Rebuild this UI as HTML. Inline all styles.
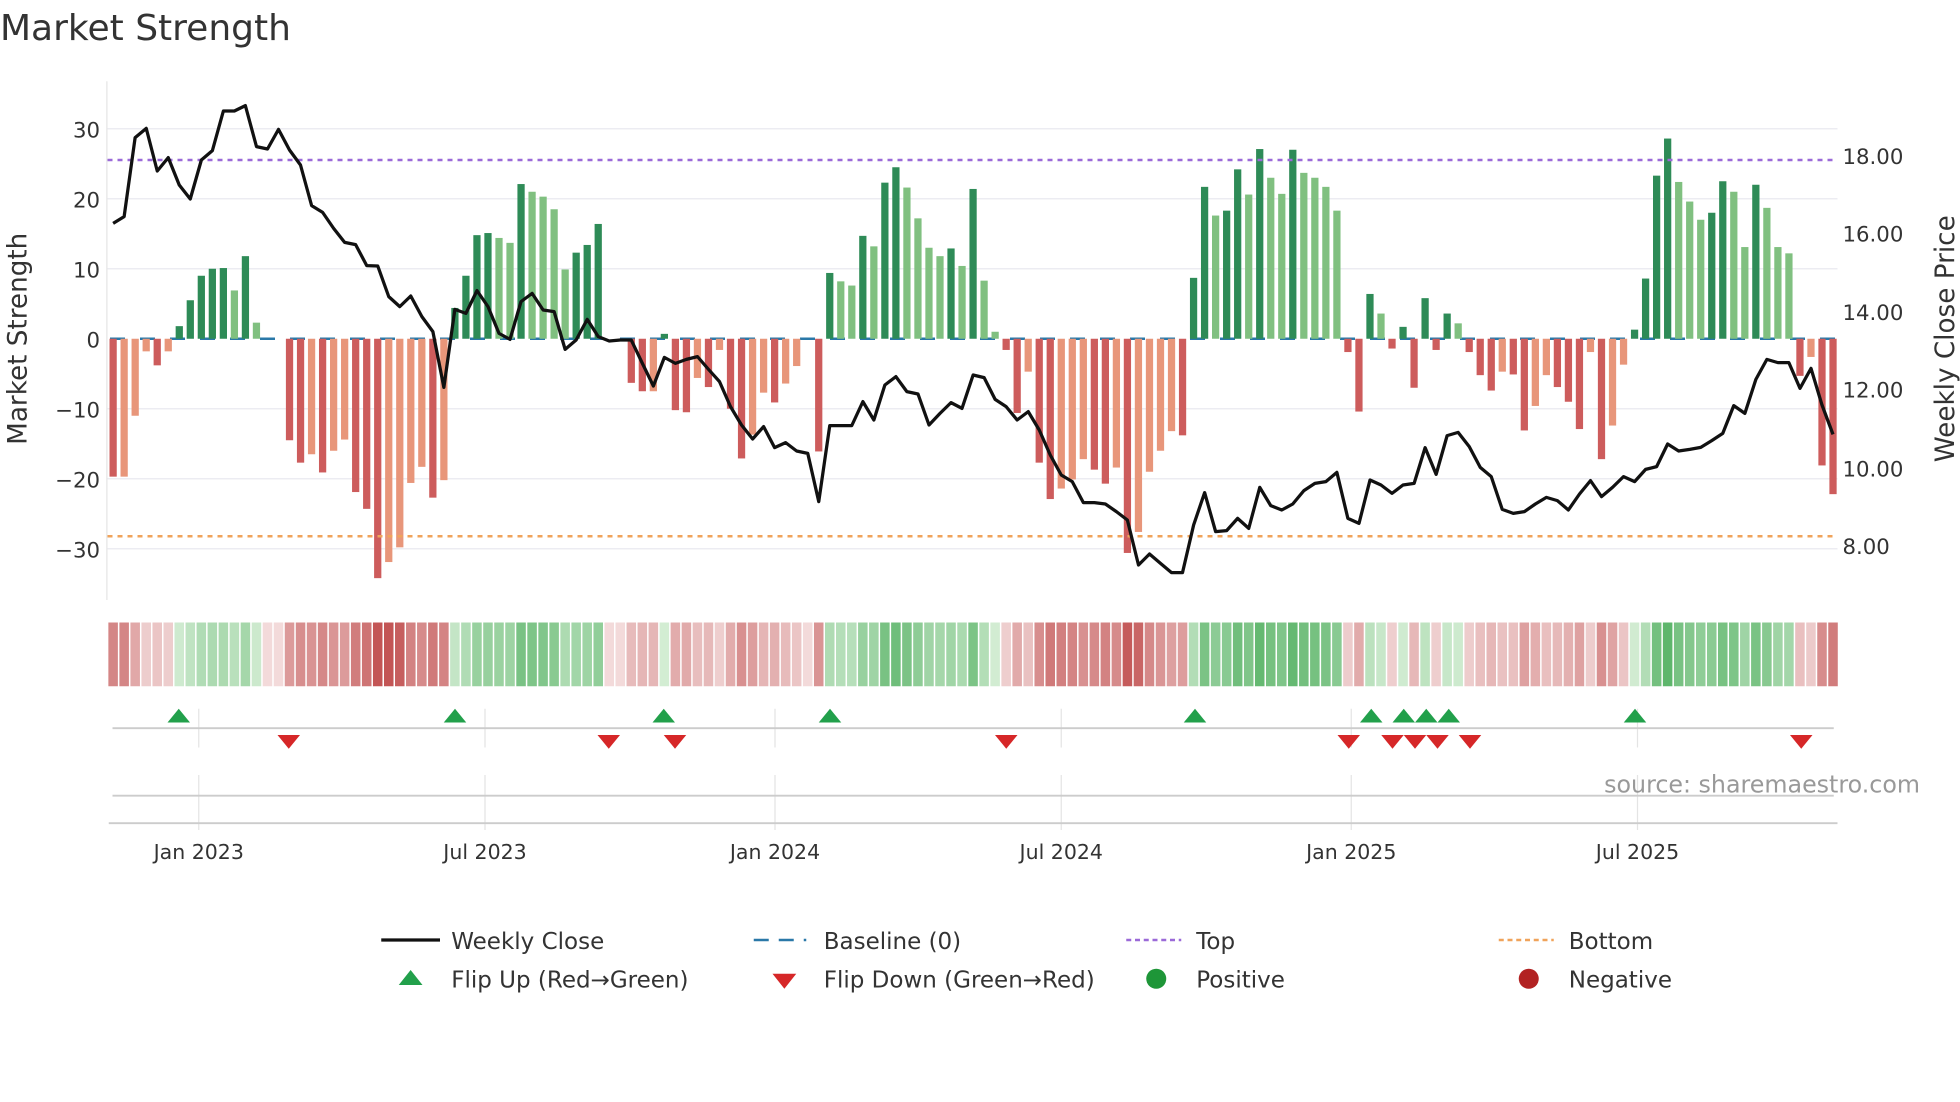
<!DOCTYPE html>
<html><head><meta charset="utf-8"><style>
html,body{margin:0;padding:0;background:#fff;}
svg{display:block;font-family:"DejaVu Sans","Liberation Sans",sans-serif;}
</style></head><body>
<svg id="s" width="1960" height="1102" viewBox="0 0 1568 881.6" xmlns="http://www.w3.org/2000/svg">
<rect width="1568" height="882" fill="#fff"/>
<text x="0" y="32" font-size="28.8" fill="#333">Market Strength</text>
<g id="grid"></g>
<g id="bars"></g>
<line x1="86" y1="128" x2="1468" y2="128" stroke="#9b6ad8" stroke-width="2" stroke-dasharray="4,4"/>
<line x1="86" y1="429" x2="1468" y2="429" stroke="#f0a35a" stroke-width="2" stroke-dasharray="4,4"/>
<polyline id="price" fill="none" stroke="#111" stroke-width="2.6" stroke-linejoin="round"/>
<line x1="85.5" y1="65" x2="85.5" y2="480" stroke="#e6e6e6" stroke-width="1"/>
<g font-size="17" fill="#333" text-anchor="end">
<text x="80" y="110">30</text><text x="80" y="166">20</text><text x="80" y="222">10</text><text x="80" y="278">0</text>
<text x="80" y="334">−10</text><text x="80" y="390">−20</text><text x="80" y="446">−30</text>
</g>
<g font-size="17" fill="#333">
<text x="1474" y="131">18.00</text><text x="1474" y="193">16.00</text><text x="1474" y="256">14.00</text>
<text x="1474" y="318">12.00</text><text x="1474" y="381">10.00</text><text x="1474" y="443">8.00</text>
</g>
<text transform="translate(21,271) rotate(-90)" font-size="21" fill="#333" text-anchor="middle">Market Strength</text>
<text transform="translate(1563,271) rotate(-90)" font-size="21" fill="#333" text-anchor="middle">Weekly Close Price</text>
<g id="heat"></g>
<g id="marks"></g>
<line x1="90" y1="582.5" x2="1467" y2="582.5" stroke="#ccc" stroke-width="1.5"/>
<line x1="90" y1="636.5" x2="1467" y2="636.5" stroke="#ccc" stroke-width="1.5"/>
<line x1="87" y1="658.5" x2="1470" y2="658.5" stroke="#ccc" stroke-width="1.5"/>
<text x="1536" y="634" font-size="19" fill="#999" text-anchor="end">source: sharemaestro.com</text>
<g font-size="16.4" fill="#333" text-anchor="middle">
<text x="159" y="687">Jan 2023</text><text x="388" y="687">Jul 2023</text><text x="620" y="687">Jan 2024</text>
<text x="849" y="687">Jul 2024</text><text x="1081" y="687">Jan 2025</text><text x="1310" y="687">Jul 2025</text>
</g>
<g font-size="18.4" fill="#333">
<line x1="305" y1="752" x2="352" y2="752" stroke="#111" stroke-width="2.6"/>
<text x="361" y="759">Weekly Close</text>
<line x1="603" y1="752" x2="645" y2="752" stroke="#2a78a8" stroke-width="2" stroke-dasharray="12,8"/>
<text x="659" y="759">Baseline (0)</text>
<line x1="901" y1="752" x2="945" y2="752" stroke="#9b6ad8" stroke-width="2" stroke-dasharray="4,3"/>
<text x="957" y="759">Top</text>
<line x1="1199" y1="752" x2="1243" y2="752" stroke="#f0a35a" stroke-width="2" stroke-dasharray="4,3"/>
<text x="1255" y="759">Bottom</text>
<polygon points="319,788 338,788 328.5,776" fill="#22a04b"/>
<text x="361" y="790">Flip Up (Red→Green)</text>
<polygon points="618,779 637,779 627.5,791" fill="#d62728"/>
<text x="659" y="790">Flip Down (Green→Red)</text>
<circle cx="925" cy="783" r="8" fill="#1e9638"/>
<text x="957" y="790">Positive</text>
<circle cx="1223" cy="783" r="8" fill="#b22222"/>
<text x="1255" y="790">Negative</text>
</g>
</svg>
<script>
var NS="http://www.w3.org/2000/svg";
function el(p,t,a){var e=document.createElementNS(NS,t);for(var k in a)e.setAttribute(k,a[k]);document.getElementById(p).appendChild(e);return e;}
var raw="-19.7d -19.7l -11l -1.8l -3.8d -1.8l 1.8d 5.5d 9d 10d 10.1d 6.9l 11.8d 2.3l 0 0 -14.5d -17.7d -16.5l -19.1d -16l -14.4l -21.9d -24.3d -34.2d -31.9l -29.8l -20.6l -18.3l -22.7d -20.2l 4.4d 9d 14.8d 15.1d 14.4l 13.7l 22.1d 21l 20.3l 18.5l 9.9l 12.3d 13.4d 16.4d 0 0 -6.3d -7.5d -7.5l 0.7d -10.2d -10.5d -5.6l -6.9d -1.6l -10d -17.1d -13.7l -7.7l -9.1d -6.4l -3.9l 0 -16.1d 9.4d 8.2l 7.6l 14.7d 13.2l 22.3d 24.5d 21.6l 17.2l 13l 11.8l 12.9d 10.4l 21.4d 8.3l 1l -1.6d -10.6d -4.7l -17.7d -22.9d -21.4l -20.1l -17.2l -18.7d -20.7d -18.4l -30.6d -27.6l -19l -16l -13.2l -13.8d 8.7d 21.7d 17.6l 18.3d 24.2d 20.6l 27.1d 23l 20.7l 27d 23.7l 23l 21.7l 18.3l -1.9d -10.4d 6.4d 3.6l -1.4d 1.7d -7d 5.8d -1.6d 3.6d 2.2l -1.9d -5.2d -7.4d -4.7l -5.1d -13.1d -9.6l -5.2l -6.9d -9d -12.9d -1.9l -17.2d -12.4l -3.7l 1.3d 8.6d 23.3d 28.6d 22.4l 19.6l 17l 18d 22.5d 21l 13.1l 22d 18.7l 13.1l 12.2l -5.3d -2.6l -18.1d -22.2d".split(" ");
var X0=90.5,DX=8.82,Z=271,U=5.6,W=5.8;
[30,20,10,-10,-20,-30].forEach(function(v){var y=Z-v*U;el("grid","line",{x1:86,x2:1470,y1:y,y2:y,stroke:"#ececf2","stroke-width":1.2});});
[159,388,620,849,1081,1310].forEach(function(x){el("grid","line",{x1:x,x2:x,y1:567,y2:598,stroke:"#e4e4e4","stroke-width":1});el("grid","line",{x1:x,x2:x,y1:620,y2:664,stroke:"#e4e4e4","stroke-width":1});});
el("grid","line",{x1:88,x2:1468,y1:Z,y2:Z,stroke:"#2a78a8","stroke-width":2,"stroke-dasharray":"12,12"});
raw.forEach(function(s,i){
  var v=parseFloat(s),t=s.slice(-1),x=X0+i*DX;
  var c;
  if(v>0)c=(t=="d")?"#2e8b57":"#80c080";else c=(t=="d")?"#cd5c5c":"#e8967a";
  if(v!=0){var y=v>0?Z-v*U:Z,h=Math.abs(v)*U;el("bars","rect",{x:x-W/2,y:y,width:W,height:h,fill:c});}
  var m=Math.min(Math.abs(v)/32,1),hc;
  if(v>0){var r=Math.round(214-(214-80)*m),g=Math.round(238-(238-175)*m),b=Math.round(214-(214-95)*m);hc="rgb("+r+","+g+","+b+")";}
  else if(v<0){var r=Math.round(240-(240-195)*m),g=Math.round(212-(212-85)*m),b=Math.round(212-(212-85)*m);hc="rgb("+r+","+g+","+b+")";}
  else hc="#f3dada";
  el("heat","rect",{x:x-DX/2+0.6,y:498,width:DX-1.2,height:51,fill:hc});
});
var p1=[[38,430],[71,410],[104,173],[137,145],[170,273],[203,233],[236,315],[269,357],[302,240],[335,212],[368,93],[401,93],[434,77],[467,200],[500,207],[533,148],[566,210],[599,255],[632,377],[665,397],[698,445],[731,487],[764,494],[797,557],[830,558],[863,650],[896,680],[929,648],[962,710],[995,755],[1028,922],[1061,688],[1094,700],[1127,632],[1160,680],[1193,760],[1226,778],[1259,665],[1292,640],[1325,690],[1358,695],[1391,808]];
var p2=[780,718,770,783,780,780,850,918,832,850,838,830,868,905,980,1035,1077,1040,1103,1088,1113,1120,1265,1037,1037,1037,965,1020,915,890,935,942,1035,1000,968,985,885,893,958,980,1020,995];
var p3=[1050,1125,1185,1205,1268,1268,1272,1295,1320,1455,1422,1450,1478,1478,1335,1238,1355,1352,1315,1345,1222,1277,1290,1272,1232,1210,1205,1177,1315,1330,1200,1215,1240,1215,1210,1103,1183,1067,1057,1100,1162,1190];
var p4=[1288,1300,1295,1272,1252,1262,1290,1242,1202,1250,1222,1190,1205,1168,1160,1092,1113,1108,1102,1082,1060,977,1000,898,838,848,848,925,865,975,1063];
var ys=p1.map(function(p){return p[1];}).concat(p2,p3,p4);
var pts=ys.map(function(zy,i){return (X0+i*DX).toFixed(1)+","+(64+zy/3.75).toFixed(1);}).join(" ");
document.getElementById("price").setAttribute("points",pts);
[143,364,531,664,956,1097,1123,1141,1159,1308].forEach(function(x){el("marks","polygon",{points:(x-9)+",578 "+(x+9)+",578 "+x+",567",fill:"#22a04b"});});
[231,487,540,805,1079,1114,1132,1150,1176,1441].forEach(function(x){el("marks","polygon",{points:(x-9)+",588 "+(x+9)+",588 "+x+",599",fill:"#d62728"});});
</script>
</body></html>
